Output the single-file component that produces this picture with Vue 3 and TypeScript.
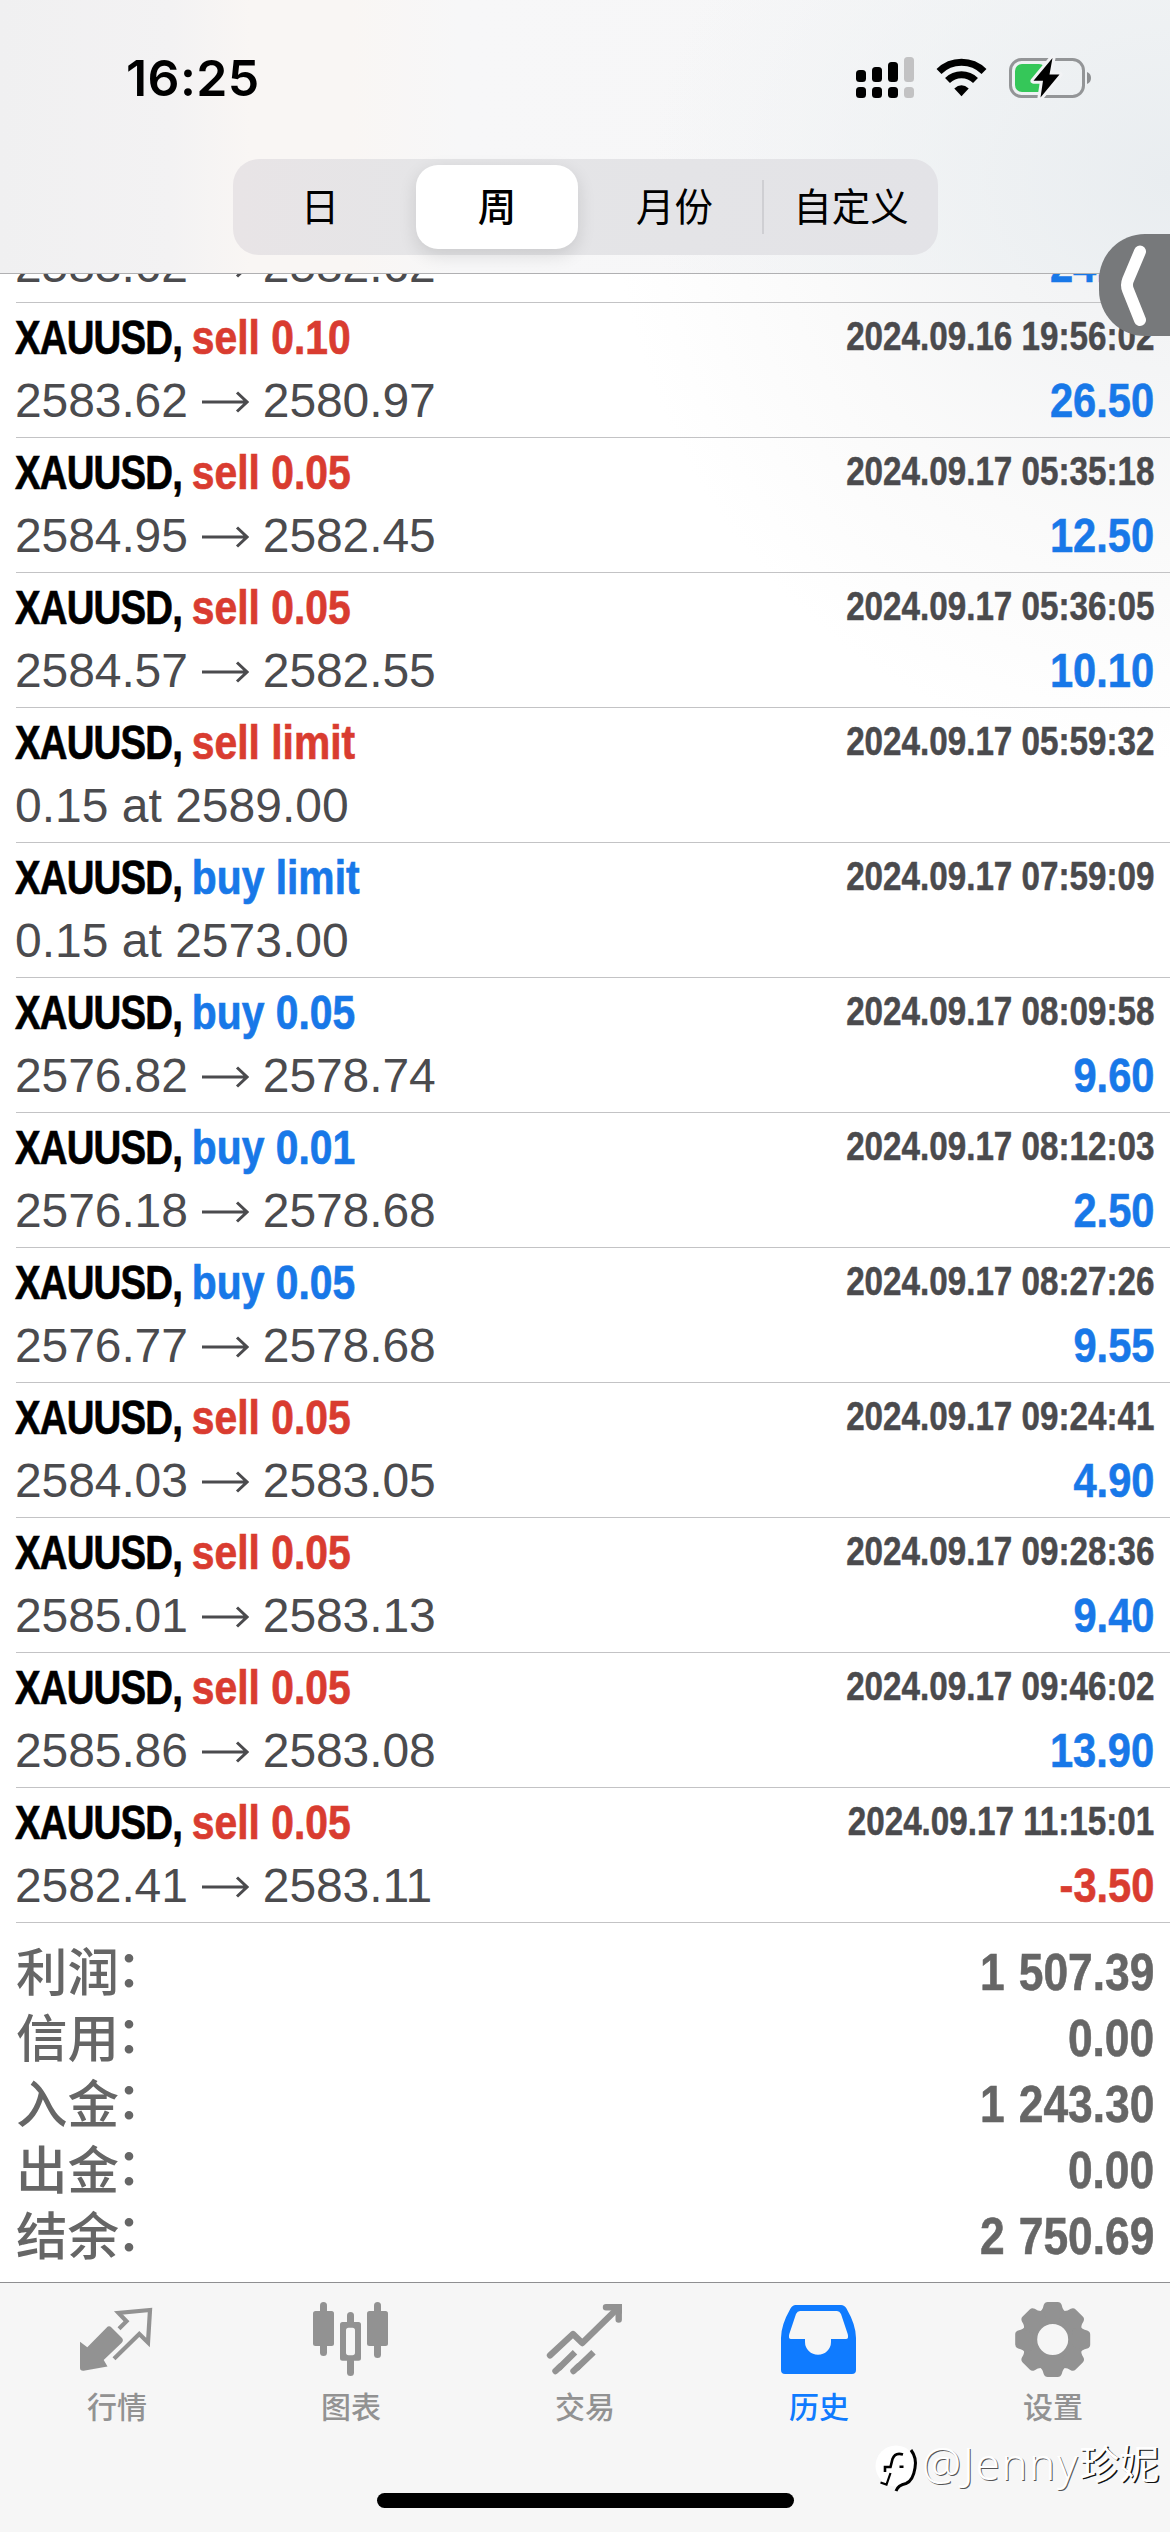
<script setup lang="ts">
interface Deal {
  side: 'buy' | 'sell'
  volume: string
  time: string
  open?: string
  close?: string
  note?: string
  profit?: string
}

const deals: Deal[] = [
  { side: 'sell', volume: '0.10', time: '2024.09.16 19:56:02', open: '2583.62', close: '2582.62', profit: '24.00' },
  { side: 'sell', volume: '0.10', time: '2024.09.16 19:56:02', open: '2583.62', close: '2580.97', profit: '26.50' },
  { side: 'sell', volume: '0.05', time: '2024.09.17 05:35:18', open: '2584.95', close: '2582.45', profit: '12.50' },
  { side: 'sell', volume: '0.05', time: '2024.09.17 05:36:05', open: '2584.57', close: '2582.55', profit: '10.10' },
  { side: 'sell', volume: 'limit', time: '2024.09.17 05:59:32', note: '0.15 at 2589.00' },
  { side: 'buy', volume: 'limit', time: '2024.09.17 07:59:09', note: '0.15 at 2573.00' },
  { side: 'buy', volume: '0.05', time: '2024.09.17 08:09:58', open: '2576.82', close: '2578.74', profit: '9.60' },
  { side: 'buy', volume: '0.01', time: '2024.09.17 08:12:03', open: '2576.18', close: '2578.68', profit: '2.50' },
  { side: 'buy', volume: '0.05', time: '2024.09.17 08:27:26', open: '2576.77', close: '2578.68', profit: '9.55' },
  { side: 'sell', volume: '0.05', time: '2024.09.17 09:24:41', open: '2584.03', close: '2583.05', profit: '4.90' },
  { side: 'sell', volume: '0.05', time: '2024.09.17 09:28:36', open: '2585.01', close: '2583.13', profit: '9.40' },
  { side: 'sell', volume: '0.05', time: '2024.09.17 09:46:02', open: '2585.86', close: '2583.08', profit: '13.90' },
  { side: 'sell', volume: '0.05', time: '2024.09.17 11:15:01', open: '2582.41', close: '2583.11', profit: '-3.50' },
]

const totals = [
  { label: '利润', value: '1 507.39' },
  { label: '信用', value: '0.00' },
  { label: '入金', value: '1 243.30' },
  { label: '出金', value: '0.00' },
  { label: '结余', value: '2 750.69' },
]

const teeth = [0, 45, 90, 135, 180, 225, 270, 315]
</script>

<template>
  <div class="screen">
    <header class="top">
      <div class="status">
        <span class="clock">16:25</span>
        <svg class="status-icons" width="240" height="44" viewBox="0 0 240 44">
          <g fill="#000">
            <rect x="1" y="15" width="10" height="12" rx="3.500" />
            <rect x="17" y="12" width="10" height="15" rx="3.500" />
            <rect x="33" y="7" width="10" height="20" rx="3.500" />
            <rect x="1" y="32" width="10" height="11" rx="3.500" />
            <rect x="17" y="32" width="10" height="11" rx="3.500" />
            <rect x="33" y="32" width="10" height="11" rx="3.500" />
          </g>
          <g fill="#c2c2c3">
            <rect x="49" y="2" width="10" height="25" rx="3.500" />
            <rect x="49" y="32" width="10" height="11" rx="3.500" />
          </g>
          <g fill="none" stroke="#000" stroke-width="7">
            <path d="M84 16.500A32 32 0 0 1 129 16.500" />
            <path d="M92.500 25.500A20 20 0 0 1 120.500 25.500" />
          </g>
          <path d="M106.500 41.300L99.300 33.500Q106.500 27 113.700 33.500Z" fill="#000" />
          <rect x="155.500" y="4.500" width="73" height="37" rx="11" fill="none" stroke="#939597" stroke-width="3" />
          <path d="M232 17Q236 18.500 236 23Q236 27.500 232 29Z" fill="#8d8f91" />
          <rect x="160" y="9" width="31" height="28" rx="7" fill="#35c759" />
          <path d="M197.500 3L178.500 25.800H188L185.500 42.500L204.500 19.500H194.500Z" fill="#000" stroke="#f2f3f5" stroke-width="6" paint-order="stroke" stroke-linejoin="round" />
        </svg>
      </div>
      <nav class="segments">
        <span class="segment day">日</span>
        <span class="segment week">周</span>
        <span class="segment month">月份</span>
        <span class="divider"></span>
        <span class="segment custom">自定义</span>
      </nav>
    </header>

    <main class="history">
      <article v-for="(deal, i) in deals" :key="i" class="deal">
        <div class="line">
          <div class="title">
            <span class="symbol">XAUUSD,</span><span :class="deal.side">{{ deal.side }} {{ deal.volume }}</span>
          </div>
          <div class="time">{{ deal.time }}</div>
        </div>
        <div class="line">
          <div v-if="deal.note" class="prices">{{ deal.note }}</div>
          <div v-else class="prices">
            <span class="price">{{ deal.open }}</span>
            <svg class="arrow" width="48" height="24" viewBox="0 0 48 24">
              <path d="M1 12H45M36 2.500L46 12L36 21.500" fill="none" stroke="currentColor" stroke-width="3" />
            </svg>
            <span class="price">{{ deal.close }}</span>
          </div>
          <div v-if="deal.profit" class="profit" :class="deal.profit.startsWith('-') ? 'sell' : 'buy'">{{ deal.profit }}</div>
        </div>
      </article>

      <section class="totals">
        <div v-for="t in totals" :key="t.label" class="total">
          <span class="label">{{ t.label }}<span class="colon">：</span></span>
          <span class="amount">{{ t.value }}</span>
        </div>
      </section>
    </main>

    <footer class="tabs">
      <div class="tab">
        <svg width="78" height="78" viewBox="0 0 78 78">
          <path d="M2 41.700L9.300 47.300L28.500 27.800Q31 25 33.500 27.600L44 38Q46 40.500 43.500 43L25.700 60L29.500 66.500L7 70.500Q2 71.500 2 68Z" fill="currentColor" />
          <path d="M41 28.700L48.500 21.300L40.500 13L72 10L70 42.500L61.300 34L36 58.700" fill="none" stroke="currentColor" stroke-width="4.200" />
        </svg>
        <span>行情</span>
      </div>
      <div class="tab">
        <svg width="78" height="78" viewBox="0 0 78 78" fill="currentColor">
          <rect x="8" y="2" width="7" height="54" rx="3.500" />
          <rect x="1" y="11" width="21" height="35" rx="2.500" />
          <rect x="62" y="2" width="7" height="56" rx="3.500" />
          <rect x="55" y="11" width="21" height="35" rx="2.500" />
          <rect x="35" y="12" width="7" height="14" rx="3.500" />
          <rect x="35" y="57" width="7" height="19" rx="3.500" />
          <path fill-rule="evenodd" d="M30.500 22H46.500Q49 22 49 24.500V58.200Q49 60.700 46.500 60.700H30.500Q28 60.700 28 58.200V24.500Q28 22 30.500 22ZM36.500 27.700Q34 27.700 34 30.500V52.500Q34 55.300 36.500 55.300H40.500Q43 55.300 43 52.500V30.500Q43 27.700 40.500 27.700Z" />
        </svg>
        <span>图表</span>
      </div>
      <div class="tab">
        <svg width="78" height="78" viewBox="0 0 78 78" fill="none" stroke="currentColor" stroke-width="6.400">
          <path stroke-linecap="round" stroke-linejoin="round" d="M4 55.300L27 34L36.300 43L72 8" />
          <path stroke-linecap="round" d="M60 7.300H72.700V19.500" />
          <path stroke="none" fill="currentColor" d="M66 4H76V14Z" />
          <path d="M12.500 68.500L29 52.300M30.500 68.500L47.500 52.300" />
          <path stroke-linecap="round" d="M9.500 71L14 66.700M27.500 71L32 66.700" />
        </svg>
        <span>交易</span>
      </div>
      <div class="tab current">
        <svg width="78" height="78" viewBox="0 0 78 78">
          <path fill="currentColor" fill-rule="evenodd" d="M15.500 5H61Q64.500 5 66.500 8.500Q76 25 76 38V70Q76 74 72 74H5Q1 74 1 70V38Q1 25 10.500 8.500Q12.500 5 15.500 5ZM20 11Q17.500 11 16 14L9.300 34Q8 39 11 39H25V42A13 12.700 0 0 0 51 42V39H66Q69 39 67.700 34L61 14Q59.500 11 57 11Z" />
        </svg>
        <span>历史</span>
      </div>
      <div class="tab">
        <svg width="78" height="78" viewBox="0 0 78 78">
          <g transform="translate(38.700 39.500)">
            <circle r="22" fill="none" stroke="currentColor" stroke-width="13" />
            <path v-for="angle in teeth" :key="angle" :transform="`rotate(${angle})`" fill="currentColor" d="M-5 -37.500H5Q8 -37.500 9 -34.500Q10 -29 14 -27L10 -20H-10L-14 -27Q-10 -29 -9 -34.500Q-8 -37.500 -5 -37.500Z" />
          </g>
        </svg>
        <span>设置</span>
      </div>
      <div class="home-bar"></div>
    </footer>

    <div class="drawer">
      <svg width="71" height="102" viewBox="0 0 71 102">
        <path d="M41 17.500L29 46Q27 51 29 56L41 86" fill="none" stroke="#fff" stroke-width="12" stroke-linecap="round" stroke-linejoin="round" />
      </svg>
    </div>

    <div class="watermark">
      <svg width="46" height="50" viewBox="0 0 46 50">
        <circle cx="21" cy="22" r="20.500" fill="#fff" />
        <g fill="none" stroke="#000">
          <path d="M28 10.500Q20 8 17.500 15L15.500 23H10V28" stroke-width="2.600" />
          <path d="M15.500 29L11.500 40.500L5.500 38.500" stroke-width="2.200" />
          <path d="M36 6Q42 14 40 24Q38 37 31 39.500Q23 41 21 47" stroke-width="3" />
        </g>
        <rect x="24.500" y="21.500" width="4" height="2.500" fill="#000" />
      </svg>
      <span class="handle">@Jenny</span><span class="handle-cjk">珍妮</span>
    </div>
  </div>
</template>

<style>
body {
  margin: 0;
  background: #fff;
}
</style>

<style scoped>
.screen {
  position: relative;
  display: flex;
  flex-direction: column;
  width: 1170px;
  height: 2532px;
  overflow: hidden;
  background: radial-gradient(ellipse 560px 600px at 1170px 160px, #eff0f2 0%, #f4f5f6 35%, #fafafa 65%, #fff 100%), #fff;
  font-family: "Liberation Sans", Arial, "Noto Sans CJK SC", sans-serif;
}

.top {
  box-sizing: border-box;
  flex: none;
  height: 274px;
  border-bottom: 1px solid #b0b0b2;
  background:
    radial-gradient(ellipse 520px 420px at 1170px 180px, #e9edf0 0%, rgba(236, 240, 242, 0.6) 50%, rgba(247, 247, 247, 0) 100%),
    linear-gradient(90deg, #f0f0f1 0, #f3f2f3 170px, #f9f6f4 250px, #f9f6f4 350px, #f7f7f8 460px, #f6f6f7 100%);
}

.status {
  display: flex;
  justify-content: space-between;
  align-items: flex-start;
  height: 159px;
  padding: 0 75px 0 126px;
  box-sizing: border-box;
}

.clock {
  margin-top: 48px;
  font: 600 50px/60px Inter, sans-serif;
  letter-spacing: 0.4px;
}

.status-icons {
  margin-top: 55px;
}

.segments {
  display: flex;
  align-items: center;
  box-sizing: border-box;
  width: 705px;
  height: 96px;
  margin-left: 233px;
  padding: 6px;
  border-radius: 26px;
  background: linear-gradient(90deg, #e8e4e6 0, #e5e5e7 200px, #e3e3e7 100%);
  font: 400 38.500px/79px "Noto Sans CJK SC", sans-serif;
  color: #000;
}

.segment {
  box-sizing: border-box;
  flex: none;
  width: 162px;
  height: 84px;
  text-align: center;
}

.week {
  margin-left: 15px;
  border-radius: 22px;
  background: #fff;
  font-weight: 500;
  box-shadow: 0 6px 18px rgba(0, 0, 0, 0.12);
}

.month {
  width: 184px;
  padding-left: 9px;
}

.custom {
  width: 168px;
  padding-left: 6px;
}

.divider {
  flex: none;
  width: 2px;
  height: 54px;
  background: #cfcfd3;
}

.history {
  flex: none;
  height: 2008px;
  overflow: hidden;
}

.deal {
  box-sizing: border-box;
  height: 135px;
  margin-left: 16px;
  padding: 3px 16px 0 0;
  border-bottom: 1px solid #c3c3c5;
}

.deal:first-child {
  margin-top: -106px;
}

.line {
  display: flex;
  justify-content: space-between;
  height: 63px;
  font-size: 48px;
  line-height: 63px;
  white-space: nowrap;
}

.title {
  margin-left: -1px;
  font-weight: 700;
  -webkit-text-stroke: 0.7px currentColor;
  transform: scaleX(0.85);
  transform-origin: 0 0;
}

.symbol {
  display: inline-block;
  margin-right: -1px;
  letter-spacing: -1px;
  color: #000;
  transform: scaleX(0.94);
  transform-origin: 0 0;
}

.sell {
  color: #d93c30;
}

.buy {
  color: #1878e8;
}

.time {
  font-size: 40px;
  font-weight: 700;
  line-height: 60px;
  color: #4a4a4d;
  -webkit-text-stroke: 0.5px currentColor;
  transform: scaleX(0.83);
  transform-origin: 100% 0;
}

.prices {
  display: flex;
  align-items: center;
  margin-left: -1px;
  color: #4b4b4e;
}

.price {
  letter-spacing: -0.100px;
}

.arrow {
  margin: 2px 14px 0 13px;
}

.profit {
  font-weight: 700;
  -webkit-text-stroke: 0.6px currentColor;
  transform: scaleX(0.867);
  transform-origin: 100% 0;
}

.totals {
  padding: 16px 16px 0;
}

.total {
  display: flex;
  justify-content: space-between;
  height: 66px;
  line-height: 66px;
  color: #666;
}

.label {
  display: flex;
  margin-top: -3px;
  font-family: "Noto Sans CJK SC", sans-serif;
  font-size: 51.500px;
  font-weight: 500;
}

.colon {
  margin-top: -1px;
  margin-left: -3px;
  font-family: "Noto Sans CJK JP", sans-serif;
  font-feature-settings: "halt" 1;
}

.amount {
  font-size: 52px;
  font-weight: 700;
  word-spacing: 2px;
  -webkit-text-stroke: 0.6px currentColor;
  transform: scaleX(0.853);
  transform-origin: 100% 0;
}

.tabs {
  box-sizing: border-box;
  flex: none;
  display: flex;
  flex-wrap: wrap;
  align-content: flex-start;
  justify-content: center;
  height: 250px;
  padding-top: 17px;
  border-top: 1px solid #8f8f91;
  background: #f6f6f6;
}

.tab {
  display: flex;
  flex-direction: column;
  align-items: center;
  width: 234px;
  height: 193px;
  color: #929292;
  font: 500 30px/44px "Noto Sans CJK SC", sans-serif;
}

.tab span {
  margin-top: 5px;
}

.tab.current {
  color: #0f7bff;
}

.home-bar {
  width: 417px;
  height: 15px;
  border-radius: 8px;
  background: #000;
}

.drawer {
  position: absolute;
  top: 234px;
  right: 0;
  width: 71px;
  height: 102px;
  border-radius: 46px 0 0 46px;
  background: #77797b;
}

.watermark {
  position: absolute;
  top: 2444px;
  left: 875px;
  display: flex;
  align-items: flex-start;
  color: #fff;
  white-space: nowrap;
}

.handle {
  margin-top: -1px;
  margin-left: 1px;
  font: 300 44px/40px "Noto Sans", sans-serif;
  letter-spacing: 1.600px;
  text-shadow: 1px 1px 0 #555;
}

.handle-cjk {
  margin-top: -1px;
  font: 400 40px/38px "Noto Sans CJK SC", sans-serif;
  text-shadow: 1.500px 1px 0 #111;
}
</style>
